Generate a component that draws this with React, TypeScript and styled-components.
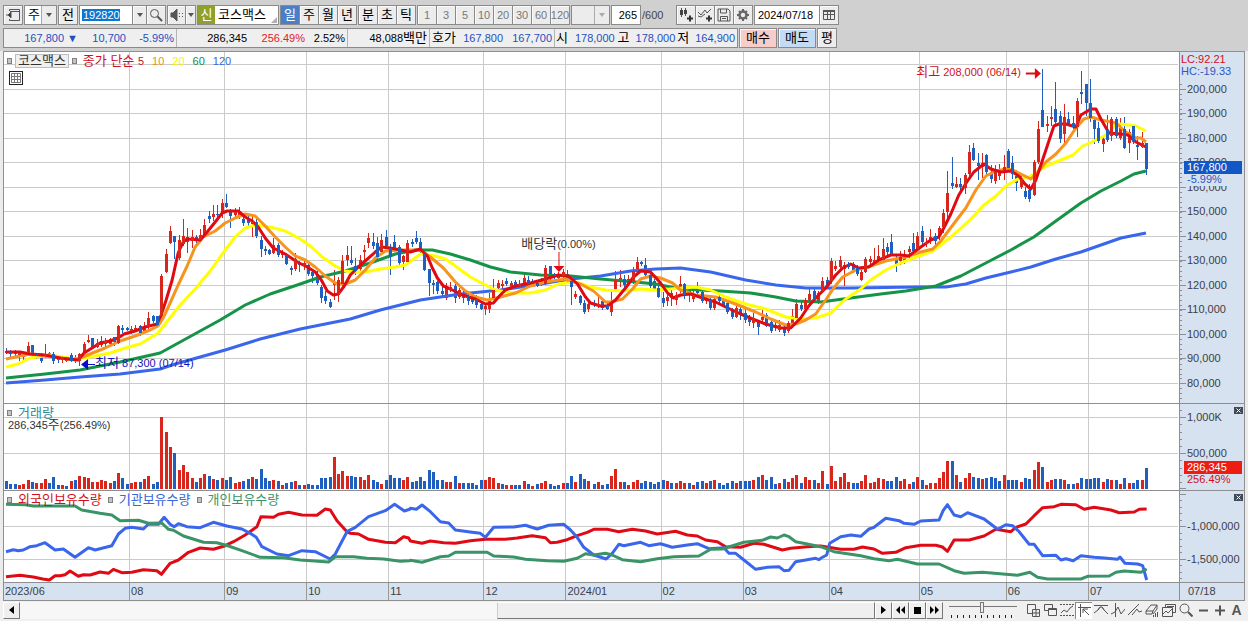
import React from "react";
import styled, { createGlobalStyle, css } from "styled-components";

/* ---------- palette ---------- */
const c = {
  up: "#d8261c",
  down: "#1f5fbf",
  ma5: "#e00a14",
  ma10: "#f7941d",
  ma20: "#ffff00",
  ma60: "#159447",
  ma120: "#3a66ec",
  retail: "#3a9468",
  grid: "#cacaca",
  line: "#8f8f8f",
  axis: "#d7e2f0",
  ink: "#3c4048",
};

const FONT = '"Liberation Sans", "Noto Sans CJK KR", sans-serif';

const Global = createGlobalStyle`
  *, *::before, *::after { box-sizing: border-box; }
  html, body { margin: 0; padding: 0; background: #ececec; }
  body, button, input, select { font-family: ${FONT}; font-size: 11px; line-height: 16px; color: #000; }
  button, input, select { margin: 0; padding: 0; border-radius: 0; }
`;

/* Hangul is set two pixels larger than the figures beside it. */
const Ko = styled.span`
  font-size: 13px;
`;

/* ---------- market data ---------- */

/* One candle per trading day: direction, then high, body top, body bottom, low. */
const CANDLES = `
b348 351 353 354|b350 352 354 357|b350 351 354 358|r352 353 355 361|r354 355 357 360|r342 346 353 355|b345 345 355 357|b353 354 356 359|b353 355 361 363|r344 354 356 358
b352 353 355 357|b352 354 361 364|b356 357 360 363|r356 357 360 363|r356 358 361 362|b353 355 361 362|r355 357 361 363|r353 354 361 366|r342 344 353 354|r335 340 342 343
b338 338 347 349|r339 343 347 348|r336 341 345 347|r338 341 344 349|r338 339 344 347|b337 337 342 346|r325 326 343 344|b325 328 330 333|b327 328 330 331|r326 329 331 334
r325 328 330 332|b325 326 333 336|r322 327 331 332|r312 318 327 330|b315 316 321 323|b316 316 325 327|r274 276 316 318|r249 254 272 273|r226 231 243 244|b236 236 242 259
r235 240 258 260|r219 236 244 246|r228 237 242 253|r230 237 241 248|b235 237 240 244|r229 235 240 242|r219 225 237 238|b211 216 219 223|r205 214 217 221|b205 214 215 219
r199 203 214 218|b194 203 207 208|b209 210 216 228|r208 212 215 219|r207 212 216 219|b214 219 223 226|b216 220 223 226|r215 221 224 237|b216 222 236 238|b236 240 249 257
b246 249 251 255|b249 250 254 255|r238 245 253 254|b243 245 255 257|r250 252 255 258|b254 255 264 265|b266 268 270 275|r253 259 269 271|b261 263 265 272|r261 263 266 270
b262 265 274 276|b270 272 276 283|b271 274 283 285|b285 287 298 303|b291 296 301 304|b299 302 307 308|r270 283 285 300|r277 280 294 302|r255 261 284 286|r246 255 260 266
b246 260 263 265|b258 266 271 275|r255 260 269 271|r245 250 252 262|r233 238 243 248|b233 242 246 249|b237 243 257 261|r234 240 252 254|b230 237 246 248|b244 248 257 275
b235 242 250 252|b245 247 263 265|r255 256 262 270|r240 243 262 265|b239 242 244 247|b231 238 242 244|b238 242 252 254|b252 253 270 271|b269 269 283 296|b280 283 285 294
b281 282 291 294|b286 291 294 297|r283 288 298 300|r282 287 290 292|b284 286 298 303|r288 290 297 299|b290 294 298 303|b291 296 301 305|b294 298 302 304|b295 299 305 308
b301 304 309 310|r304 306 309 315|r293 301 309 313|r279 290 298 300|r280 283 288 290|r280 284 286 290|b278 281 284 286|r281 283 286 289|b280 282 285 286|r280 284 286 288
r274 278 284 286|b276 280 284 286|b279 282 285 287|b281 283 286 287|r278 281 284 286|r265 268 284 285|b266 266 275 280|b273 274 276 279|r272 274 278 280|r269 272 276 279
b270 274 280 282|b280 281 287 305|r291 294 297 299|b295 296 303 305|b300 303 312 314|r301 304 309 312|b300 303 305 307|r295 304 306 308|b299 301 308 310|b303 305 309 310
r292 302 312 316|r271 280 289 290|r270 278 281 287|b275 279 285 288|r275 279 284 285|r267 271 281 284|r257 262 272 274|b261 262 264 266|b258 265 275 276|b274 275 286 288
b279 281 289 290|b286 288 297 298|b292 298 303 307|r291 297 301 306|r289 293 298 306|r292 295 300 305|r276 284 291 293|b283 284 295 299|r287 291 294 302|r291 295 299 302
b282 288 293 295|b289 292 301 303|r295 298 301 304|b297 300 308 310|r297 299 308 310|b295 297 301 303|b298 300 305 306|b302 303 312 314|b308 310 317 319|r306 308 317 318
b307 309 315 320|b307 313 320 323|b315 319 322 326|r313 318 323 328|b320 322 327 335|r307 317 320 323|b313 315 326 327|b321 322 331 333|b320 325 328 331|r320 325 330 332
b324 327 333 336|r321 323 331 333|r309 316 324 328|r299 304 318 320|b302 305 309 311|r298 300 309 311|r288 294 302 307|b289 291 300 302|r291 293 303 304|r277 281 291 293
b277 280 286 289|r258 261 281 284|r261 266 269 271|r256 260 267 272|r262 265 269 286|b262 264 267 269|b262 264 270 273|b265 268 274 276|r268 272 280 281|r257 259 272 273
r256 259 262 265|r248 260 262 266|r245 256 261 263|r238 249 260 262|b243 247 252 256|b234 242 254 256|b255 258 265 272|r251 257 261 265|r250 254 262 264|r246 249 252 258
b233 243 251 253|r232 236 249 251|b226 231 242 246|r238 242 244 247|r229 237 241 244|b233 236 241 245|r226 228 236 240|r209 213 227 233|r171 193 212 222|b157 183 186 189
r177 184 187 188|b178 184 187 193|r173 175 188 194|r145 152 174 178|b143 148 160 161|b153 163 166 180|r153 163 167 178|b154 155 172 176|b165 172 179 183|r165 172 181 184
r164 172 176 180|r155 167 170 180|b149 151 168 171|b156 163 174 179|b170 176 183 191|r174 179 187 189|b187 191 197 199|b184 190 199 202|r160 162 195 196|r121 129 162 164
b69 110 127 127|r116 124 126 132|r106 117 119 126|b82 109 122 124|b111 116 139 143|r104 117 134 146|b112 119 124 126|b116 123 127 129|r98 101 127 137|b71 92 94 104
b84 84 103 116|b79 103 118 122|b117 120 129 144|b122 128 141 143|r136 139 144 152|b115 130 140 142|r117 119 136 141|b117 119 136 138|r118 128 138 140|b117 129 148 149
r129 132 143 153|b126 126 142 144|b136 145 147 160|r132 143 147 148|b143 143 169 175`
  .trim()
  .split(/[|\n]/)
  .map((s) => {
    const [high, top, bottom, low] = s.slice(1).split(" ").map(Number);
    return { up: s[0] === "r", high, top, bottom, low };
  });

/* Daily volume: direction and bar height. */
const VOLUME = `
b8 b5 b5 r4 r5 r9 b7 r6 r6 r10 b6 b12 b4 r4 b3 r8 b9 r13 r12 r11
r7 r7 r9 r8 r6 b8 r16 b11 b5 r6 r7 b7 r10 r13 b5 b7 r72 r57 r42 b36
r19 r24 r17 r11 b7 r11 r15 b13 r10 b9 r11 b9 b12 r6 r7 b8 b10 r12 b10 b20
b11 b8 r9 b8 r4 b6 b7 r8 b4 r4 b5 b4 b4 b11 b11 b12 r32 r15 r18 r13
b13 b12 r12 r9 r14 b9 b7 r5 b9 b14 b11 b11 r9 r12 b7 b8 b12 b8 b19 b17
b9 b9 r7 r7 b13 r6 b6 b6 b6 b4 b9 r9 r12 r11 r6 b5 r4 r4 b4 b4
r8 b5 r3 b5 r6 r8 b5 b3 b4 r6 b6 b13 r7 b15 b10 r8 b5 r7 b4 b5
r13 r20 r7 b7 r4 r7 r9 b6 b8 b7 b5 b7 b9 r8 b6 r6 r8 r6 b6 r4
b7 b8 r6 b8 r9 b6 b4 b6 b8 r6 b8 b8 b8 r9 b12 r14 b9 b12 b5 r6
b10 r7 r11 r14 b6 r12 r9 b9 r6 r18 b5 r23 r8 r12 r16 r7 b6 b6 r8 r14
r6 r7 r11 r10 b8 b8 b12 r8 r10 r5 b7 r12 b9 r4 r6 r6 r11 r17 r28 b28
r14 b7 r11 r16 b12 b11 r10 b11 b12 b11 b8 r14 b9 b9 b9 r7 b11 b10 r19 r27
b22 r7 r9 b10 b10 r9 b5 b5 r6 b11 b10 b10 b11 b11 r7 b10 r9 b9 r5 b11
r6 b6 b9 r9 b21`
  .trim()
  .split(/\s+/)
  .map((s) => ({ up: s[0] === "r", h: Number(s.slice(1)) }));

const MOVING_AVERAGES = [
  {
    color: c.ma120,
    points:
      "6,383 45,380 80,377 120,374 160,369 175,364 200,357 225,350 260,339 300,329 350,319 380,310 420,300 460,294 500,290 540,284 570,279 600,276 630,271 655,269 680,268 710,272 745,280 775,285 805,288 850,288 918,287 945,287 965,284 985,278 1010,272 1030,267 1055,259 1080,252 1100,245 1120,238 1145,233",
  },
  {
    color: c.ma60,
    points:
      "6,378 45,374 80,370 120,362 160,353 180,342 200,331 220,320 245,305 270,294 300,284 320,277 345,271 370,263 395,254 415,250 432,250 450,254 470,260 490,267 510,272 540,275 570,276 600,279 635,282 655,284 680,289 720,291 750,293 775,297 795,301 820,302 850,298 880,294 905,291 935,286 960,276 985,263 1010,250 1033,237 1055,221 1080,203 1100,191 1120,181 1133,174 1145,171",
  },
  {
    color: c.ma20,
    points:
      "6,367 18,364 30,358 50,355 75,359 90,357 110,353 125,348 140,344 158,333 165,324 180,305 195,289 210,271 225,250 235,237 245,228 255,225 270,227 285,231 300,239 310,246 322,257 335,266 345,271 355,272 365,272 380,269 395,267 405,265 412,260 420,254 435,256 445,259 455,266 470,277 483,284 495,290 505,292 515,293 530,293 545,290 558,284 575,282 590,287 605,290 620,291 640,289 655,290 670,289 695,287 710,290 725,297 745,304 765,309 785,317 800,319 815,318 830,313 845,299 860,289 870,280 885,270 900,263 918,256 932,251 945,241 957,231 970,219 983,205 995,196 1005,186 1017,179 1028,177 1035,173 1045,166 1060,160 1072,155 1082,146 1095,140 1107,134 1114,125 1120,124 1135,126 1145,131",
  },
  {
    color: c.ma10,
    points:
      "6,359 20,356 30,354 45,356 60,358 75,360 90,354 105,348 120,341 135,336 150,330 158,326 163,318 170,303 178,285 187,266 195,247 203,237 215,231 225,223 235,218 245,214 255,216 265,226 275,237 285,247 295,256 305,260 315,267 325,276 335,283 345,284 355,280 365,270 375,258 385,251 400,250 420,250 430,257 443,268 455,282 465,291 475,297 487,300 500,297 515,293 530,286 545,282 565,279 580,284 593,291 605,302 610,302 622,299 632,289 640,279 650,276 660,278 672,283 680,290 695,295 715,297 735,304 755,312 770,319 785,325 795,324 805,320 815,314 825,300 833,288 842,277 855,270 870,266 885,261 905,257 920,252 932,249 940,241 952,225 965,208 975,190 985,176 995,171 1005,169 1012,170 1022,175 1030,179 1037,172 1045,162 1055,154 1065,143 1075,128 1083,119 1090,117 1100,120 1115,123 1125,132 1135,138 1140,138 1145,142",
  },
  {
    color: c.ma5,
    points:
      "6,352 20,352 30,354 45,355 60,358 78,360 84,353 92,348 100,343 110,341 118,338 124,334 135,331 145,327 157,324 161,315 166,300 172,280 178,253 183,242 187,239 200,240 207,232 215,222 222,213 227,211 238,211 245,217 252,221 258,227 265,238 273,248 285,254 297,262 307,267 315,272 321,280 327,291 333,295 338,294 344,286 350,275 358,267 366,260 375,252 381,247 390,248 400,250 410,252 420,249 427,256 432,268 437,278 443,286 450,289 462,295 475,299 485,304 493,303 499,296 505,290 515,286 530,283 545,279 558,275 568,276 577,284 585,297 590,303 600,306 607,306 615,300 625,288 633,277 640,271 650,272 660,283 667,293 673,298 680,295 690,294 705,299 715,302 725,307 740,314 752,319 765,324 780,328 790,328 800,318 808,306 815,298 825,288 835,275 842,268 850,264 858,268 868,267 878,260 890,255 900,255 908,256 920,247 930,240 938,237 943,228 950,214 958,195 966,182 973,172 983,164 990,169 1000,172 1010,171 1018,176 1024,184 1030,189 1035,180 1040,165 1046,147 1053,126 1058,124 1065,124 1075,127 1080,115 1090,109 1095,109 1100,119 1108,133 1120,134 1127,135 1135,142 1145,147",
  },
];

/* Holdings are stored in thirds of a unit, in three stretches of the session range. */
const STRETCH_START = [0, 410, 820];
const holdings = (stretches: string[]) =>
  stretches
    .map((s, i) =>
      s
        .split(" ")
        .map((p) => {
          const [x, y] = p.split(",").map(Number);
          return `${(STRETCH_START[i] + x / 3).toFixed(1)},${(400 + y / 3).toFixed(1)}`;
        })
        .join(" ")
    )
    .join(" ");

const INVESTORS = [
  {
    color: c.ma5,
    points: holdings([
      "18,530 60,526 100,531 128,537 148,540 165,527 180,527 195,524 210,513 235,529 250,524 270,525 300,516 325,520 340,508 365,518 395,517 430,509 470,512 484,523 510,490 535,480 565,457 600,444 640,448 675,437 700,425 735,405 770,380 782,350 820,352 835,343 865,337 905,345 950,346 975,327 990,330 1010,362 1040,395 1050,400 1075,402 1105,418 1155,427 1185,428 1210,410 1225,414",
      "0,423 35,430 60,423 100,428 135,430 180,422 225,418 285,418 320,414 365,407 405,413 420,428 440,427 470,419 500,407 530,397 550,388 590,388 625,395 665,388 705,393 740,402 795,394 830,405 860,408 885,420 920,425 945,440 990,442 1030,430 1060,433 1115,450 1140,445 1190,440 1225,438",
      "0,438 60,448 100,448 125,441 160,447 185,460 225,457 255,443 300,436 345,436 365,441 380,454 400,420 445,420 490,408 525,388 570,395 585,382 615,372 640,347 665,323 700,320 720,313 765,314 790,328 820,322 870,330 895,338 940,336 955,328 977,327",
    ]),
  },
  {
    color: c.ma120,
    points: holdings([
      "18,455 40,449 55,452 70,450 90,440 110,437 135,428 165,450 190,447 225,472 265,443 285,450 335,437 355,402 375,385 395,382 430,387 445,372 475,373 492,352 510,373 522,380 535,371 560,380 600,383 640,367 680,378 725,387 750,400 768,412 785,440 830,462 865,467 905,452 945,455 990,477 1005,462 1040,395 1065,382 1105,350 1155,332 1183,313 1212,333 1228,328",
      "0,325 18,328 35,315 60,335 90,365 115,369 135,390 185,397 210,400 225,412 250,382 310,381 345,376 380,387 415,376 460,373 480,390 500,412 520,442 550,465 587,477 605,460 625,433 640,437 690,427 715,437 750,431 785,442 830,435 860,431 895,446 940,443 955,460 975,460 1000,480 1035,508 1070,502 1105,500 1120,512 1135,511 1155,485 1215,475 1225,479",
      "0,475 18,465 27,430 60,410 90,405 120,409 145,387 160,382 195,355 235,362 250,370 280,373 300,363 355,360 367,332 380,314 400,345 420,350 440,338 490,357 530,388 555,374 575,377 595,395 625,433 640,433 665,467 705,466 720,480 735,476 757,482 780,467 820,472 850,474 890,478 897,471 912,490 950,492 965,497 977,540",
    ]),
  },
  {
    color: c.retail,
    points: holdings([
      "18,313 75,314 100,318 225,318 245,330 300,340 335,345 360,362 415,361 445,370 485,369 505,388 520,391 550,408 610,427 650,428 685,438 725,452 780,472 850,473 900,480 985,486 1005,470 1060,470 1100,475 1150,477 1200,484 1228,482",
      "0,481 35,487 90,470 115,468 135,457 230,457 250,468 310,471 345,478 410,482 460,484 500,475 525,461 550,465 585,460 605,465 635,479 690,485 740,476 790,470 865,468 900,448 935,447 1000,427 1055,421 1080,411 1100,414 1120,405 1135,410 1155,425 1190,432 1228,440",
      "0,440 40,455 120,467 160,476 205,482 230,478 290,492 355,492 400,512 430,520 485,517 590,526 627,517 650,532 680,537 780,537 800,529 865,528 885,517 910,513 960,517 977,507",
    ]),
  },
];

/* Months on the time axis, with the share of the width that each takes. */
const MONTHS: [string, number][] = [
  ["2023/06", 125],
  ["08", 95],
  ["09", 82],
  ["10", 82],
  ["11", 95],
  ["12", 82],
  ["2024/01", 95],
  ["02", 82],
  ["03", 86],
  ["04", 90],
  ["05", 87],
  ["06", 82],
  ["07", 91],
];

const LEFT = 4;
const WIDTH = 1174;
const monthLines = MONTHS.slice(0, -1).reduce<number[]>(
  (acc, [, w]) => [...acc, (acc.length ? acc[acc.length - 1] : LEFT) + w],
  []
);
const candleX = (i: number) => Math.round(6 + i * 4.314);
const priceY = (p: number) => Math.round(333.9 - (p - 100) * 2.45);

/* ---------- toolbar parts ---------- */

const Header = styled.header`
  display: flex;
  flex-direction: column;
  gap: 3px;
  padding: 5px 3px 3px;
  background: #d0d0d0;
`;

const Bar = styled.div`
  display: flex;
  height: 20px;
  white-space: nowrap;
`;

const Group = styled.div`
  display: flex;
  margin-right: 1px;
  > * + * { margin-left: -1px; }
`;

type Tone = "plain" | "active" | "dim" | "buy" | "sell";
const toneCss = {
  plain: css`background: #ececec; color: #000;`,
  active: css`background: #4a7fc8; color: #fff;`,
  dim: css`background: #ececec; color: #777; font-size: 11px;`,
  buy: css`background: #f6cdc9; color: #000;`,
  sell: css`background: #c3dbf5; color: #000;`,
};

const Key = styled.button<{ $w?: number; $tone?: Tone }>`
  display: flex;
  align-items: center;
  justify-content: center;
  width: ${(p) => p.$w ?? 20}px;
  height: 20px;
  border: 1px solid #8a8a8a;
  box-shadow: ${(p) => (p.$tone === "active" ? "none" : "inset 1px 1px 0 #fafafa")};
  font-size: 13px;
  ${(p) => toneCss[p.$tone ?? "plain"]}
`;

const SelectBox = styled.label<{ $w: number; $bg?: string; $arrow?: string }>`
  position: relative;
  display: block;
  width: ${(p) => p.$w}px;
  height: 20px;
  border: 1px solid #8a8a8a;
  background: ${(p) => p.$bg ?? "#fff"};

  select {
    display: block;
    width: 100%;
    height: 18px;
    padding-left: 3px;
    border: 0;
    appearance: none;
    background: transparent;
    font-size: 13px;
  }
  &::before {
    content: "";
    position: absolute;
    right: 0;
    top: 0;
    width: 15px;
    height: 18px;
    border-left: 1px solid #aaa;
    background: #ececec;
    pointer-events: none;
  }
  &::after {
    content: "";
    position: absolute;
    right: 4px;
    top: 7px;
    border: 3px solid transparent;
    border-top: 4px solid ${(p) => p.$arrow ?? "#555"};
    border-bottom: 0;
    pointer-events: none;
  }
`;

const TextField = styled.input<{ $w: number; $align?: string }>`
  width: ${(p) => p.$w}px;
  height: 20px;
  padding: 0 3px;
  border: 1px solid #8a8a8a;
  background: #fff;
  text-align: ${(p) => p.$align ?? "left"};
`;

const CodeField = styled(TextField)`
  color: #fff;
  background: linear-gradient(#0a78d2, #0a78d2) 2px 3px / 38px 12px no-repeat #fff;
`;

const Caret = styled.i`
  border: 3px solid transparent;
  border-top: 4px solid #555;
  border-bottom: 0;
`;

const StockName = styled.div`
  position: relative;
  display: flex;
  gap: 3px;
  width: 82px;
  border: 1px solid #8a8a8a;
  background: #fff;
  font-size: 13px;
  line-height: 18px;

  &::after {
    content: "";
    position: absolute;
    right: 1px;
    bottom: 1px;
    border: 3px solid #b0b0b0;
    border-top-color: transparent;
    border-left-color: transparent;
  }
`;

const Badge = styled.span`
  width: 17px;
  background: #8fa02c;
  color: #fff;
  text-align: center;
`;

const Total = styled.span`
  width: 34px;
  line-height: 20px;
  color: #444;
`;

const Quotes = styled.div`
  display: flex;
  margin-right: 1px;
  border: 1px solid #8a8a8a;
  background: #efefef;
`;

const QuoteCell = styled.div<{ $w: number }>`
  display: flex;
  justify-content: flex-end;
  width: ${(p) => p.$w}px;
  padding-right: 2px;
  line-height: 18px;
  & + & { border-left: 1px solid #b4b4b4; }
`;

const Quote = styled.span<{ $w: number; $color?: string }>`
  width: ${(p) => p.$w}px;
  text-align: right;
  color: ${(p) => p.$color ?? "#000"};
`;

/* ---------- chart parts ---------- */

const Frame = styled.main`
  margin: 0 3px;
  border: 1px solid ${c.line};
  background: #fff;
`;

const Pane = styled.section`
  display: grid;
  grid-template-columns: minmax(0, 1fr) 65px;
  border-bottom: 1px solid ${c.line};
`;

const Plot = styled.div`
  position: relative;
`;

const PlotSvg = styled.svg`
  display: block;
  width: 100%;
`;

const Scale = styled.div`
  position: relative;
  border-left: 1px solid ${c.line};
  background: ${c.axis};
  svg { display: block; }
  text { font-family: ${FONT}; font-size: 11px; }
`;

const Legend = styled.div`
  position: absolute;
  left: 3px;
  top: 1px;
  display: flex;
  align-items: center;
  gap: 6px;
  font-size: 13px;
`;

const Dot = styled.i`
  width: 5px;
  height: 6px;
  border: 1px solid #808080;
  background: #c4c4c4;
`;

const Chip = styled.span`
  padding: 0 2px;
  margin: 0 -3px;
  height: 14px;
  border: 1px solid #bcbcbc;
  background: #efefef;
  line-height: 12px;
  color: #333;
`;

const Series = styled.span<{ $color: string }>`
  color: ${(p) => p.$color};
`;

const Period = styled.span<{ $color: string }>`
  margin-left: 2px;
  font-size: 11px;
  color: ${(p) => p.$color};
`;

const Num = styled.span`
  font-size: 11px;
`;

const TableButton = styled.button`
  position: absolute;
  left: 5px;
  top: 19px;
  width: 14px;
  height: 14px;
  border: 1px solid #222;
  background: #fff;
  svg { display: block; }
`;

const Note = styled.span<{ $x: number; $y: number; $color: string; $shift?: string }>`
  position: absolute;
  left: ${(p) => ((p.$x - LEFT) / WIDTH) * 100}%;
  top: ${(p) => p.$y}px;
  transform: translateX(${(p) => p.$shift ?? "0"});
  color: ${(p) => p.$color};
  white-space: nowrap;
`;

const CloseBox = styled.button`
  position: absolute;
  right: 1px;
  top: 3px;
  width: 9px;
  height: 7px;
  border: 0;
  background: #414a5a;
  svg { display: block; }
`;

const TimeAxis = styled.div`
  display: grid;
  grid-template-columns: minmax(0, 1fr) 65px;
  height: 17px;
  background: ${c.axis};
  color: ${c.ink};
`;

const Months = styled.div`
  display: grid;
  grid-template-columns: ${MONTHS.map(([, w]) => `${w}fr`).join(" ")};
  span { padding-left: 1px; }
  span + span { border-left: 1px solid #999; }
`;

const Today = styled.span`
  padding-left: 8px;
  border-left: 1px solid ${c.line};
`;

/* ---------- bottom strip parts ---------- */

const Footer = styled.footer`
  display: flex;
  align-items: center;
  height: 20px;
  padding: 0 3px 2px;
  background: #f0f0f0;
`;

const Raised = styled.button`
  display: flex;
  align-items: center;
  justify-content: center;
  flex: none;
  width: 17px;
  height: 17px;
  border: 1px solid;
  border-color: #fff #777 #777 #fff;
  background: #efefef;
`;

const Track = styled.div`
  display: flex;
  flex: 1;
  height: 17px;
  background: #f7f7f7;
`;

const Handle = styled.div`
  flex: 377;
  border: 1px solid;
  border-color: #fff #777 #777 #ccc;
  background: #efefef;
`;

const Rest = styled.div`
  flex: 479;
`;

const Zoom = styled.label`
  width: 68px;
  height: 16px;
  margin: 0 7px 0 6px;
  background: repeating-linear-gradient(90deg, #222 0 1px, transparent 1px 6px) 2px 13px / 66px 3px no-repeat;

  input {
    display: block;
    width: 68px;
    height: 11px;
    appearance: none;
    background: linear-gradient(#777, #777) 0 4px / 100% 1px no-repeat;
  }
  input::-webkit-slider-thumb {
    appearance: none;
    width: 4px;
    height: 11px;
    border: 1px solid #777;
    background: #eee;
  }
`;

const Tool = styled.button<{ $on?: boolean }>`
  flex: none;
  width: 17px;
  height: 17px;
  border: 0;
  background: ${(p) => (p.$on ? "#fff" : "transparent")};
  box-shadow: ${(p) => (p.$on ? "inset 1px 1px 0 #888" : "none")};
  color: #555;
  font-size: 14px;
  font-weight: bold;
  svg { display: block; margin: 0 auto; }
`;

/* ---------- icons ---------- */

const Icon = ({ size = 14, children }: { size?: number; children: React.ReactNode }) => (
  <svg width={size} height={size} viewBox="0 0 14 14" fill="none" stroke="#555" strokeWidth="1" aria-hidden="true">
    {children}
  </svg>
);

const toolIcons: { name: string; on?: boolean; art: React.ReactNode }[] = [
  { name: "창 추가", art: <path d="M6 10.500H1.500v-9h8V6M6.500 6.500h7v7h-7zM10 6.500v7M6.500 10h7" /> },
  { name: "창 복사", art: <><path d="M1.500 1.500h8v6h-8z" /><path d="M5.500 5.500h8v7h-8z" fill="#f0f0f0" /><path d="M5.500 6.500h8" /></> },
  { name: "구간", art: <><path d="M0 1.500h14M0 12.500h14" strokeDasharray="2 1" /><path d="M1 10l3-3 3 2 3-4 3-2" /></> },
  { name: "십자선", on: true, art: <path d="M3.500 1v13M1 4.500h13M6 6l6 6M6 10V6h5" /> },
  { name: "수평선", art: <path d="M0 2.500h14M0 10l4-3 2-3 2 0 2 3 4 4M6 4l-2 3M8 4l2 3" /> },
  { name: "수직선", art: <path d="M4.500 0v14M0 11l4-2 3-5 3 7 4-5" /> },
  { name: "추세선", art: <path d="M0 12L11 1M4 12l5-6 2 3 3-1" /> },
  { name: "지우개", art: <path d="M1 8l5-6h6l-4 6zM1 8v3h6l1-3M8 11l4-5V2M8.500 12v2M10.500 10v4M12.500 9v5" /> },
  { name: "차트 겹치기", art: <><path d="M3.500 4V1.500h10v8H11M.5 4.500h10v9H.5z" /><path d="M1 11l3-3 2 2 4-4M5 3.500h7" /></> },
  { name: "돋보기", art: <><circle cx="5.500" cy="5.500" r="4.500" /><path d="M9 9l4.500 4.500" strokeWidth="2" /></> },
  { name: "축소", art: <path d="M3 7.500h9" strokeWidth="2" /> },
  { name: "확대", art: <path d="M2 7.500h10M7 2.500v10" strokeWidth="2" /> },
];

const CloseMark = () => (
  <svg width="9" height="7" viewBox="0 0 9 7" stroke="#fff" aria-hidden="true">
    <path d="M2.500 1.500l4 4M6.500 1.500l-4 4" />
  </svg>
);

/* ---------- panes ---------- */

const GridLines = ({ top, bottom, rows }: { top: number; bottom: number; rows: number[] }) => (
  <g stroke={c.grid} shapeRendering="crispEdges">
    {monthLines.map((x) => (
      <path key={x} d={`M${x + 0.5} ${top}V${bottom}`} />
    ))}
    {rows.map((y) => (
      <path key={y} d={`M${LEFT} ${y + 0.5}H${LEFT + WIDTH - 1}`} />
    ))}
  </g>
);

const prices = [200, 190, 180, 170, 160, 150, 140, 130, 120, 110, 100, 90, 80];

const Ticks = ({ major, minor }: { major: number[]; minor: number[] }) => (
  <g stroke="#8a8f98" shapeRendering="crispEdges">
    {major.map((y) => <path key={y} d={`M1180 ${y + 0.5}h6`} />)}
    {minor.map((y) => <path key={y} d={`M1180 ${y + 0.5}h2`} />)}
  </g>
);

const range = (n: number, f: (i: number) => number) => Array.from({ length: n }, (_, i) => f(i));

const Body = ({ i }: { i: number }) => {
  const k = CANDLES[i];
  return <rect x={candleX(i) - 1} y={k.top} width="3" height={Math.max(1, k.bottom - k.top)} fill={k.up ? c.up : c.down} />;
};

const PricePane = () => (
  <Pane>
    <Plot>
      <PlotSvg height="351" viewBox={`${LEFT} 52 ${WIDTH} 351`} preserveAspectRatio="none">
        <GridLines top={52} bottom={403} rows={[priceY(210), ...prices.map(priceY)]} />
        <g shapeRendering="crispEdges">
          {CANDLES.map((k, i) => (
            <g key={i}>
              <rect x={candleX(i)} y={k.high} width="1" height={k.low - k.high} fill={k.up ? c.up : c.down} />
              <Body i={i} />
            </g>
          ))}
        </g>
        <g fill="none" strokeWidth="3" strokeLinejoin="round">
          {MOVING_AVERAGES.map((m) => <polyline key={m.color} points={m.points} stroke={m.color} />)}
        </g>
        <g shapeRendering="crispEdges">
          {CANDLES.map((k, i) => (i % 2 || k.bottom - k.top > 12 ? <Body key={i} i={i} /> : null))}
        </g>
        <path d="M1025 73.500h10" stroke="#e00a14" strokeWidth="2" />
        <path d="M1034 68l6 5.500-6 5.500z" fill="#e00a14" />
        <path d="M558.500 252v15" stroke="#e00a14" />
        <path d="M553 266h11l-5.500 6z" fill="#e00a14" />
        <path d="M86 364.500h9" stroke="#0a0ac8" />
        <path d="M88 359v11l-7-5.500z" fill="#0a0ac8" />
      </PlotSvg>
      <Legend>
        <Dot />
        <Chip>코스맥스</Chip>
        <Dot />
        <Series $color="#d0101c">종가 단순 <Num>5</Num></Series>
        <Period $color="#e8901c">10</Period>
        <Period $color="#f4f400">20</Period>
        <Period $color="#158a44">60</Period>
        <Period $color="#3a66d8">120</Period>
      </Legend>
      <TableButton aria-label="표 보기">
        <svg width="12" height="12" viewBox="0 0 12 12" fill="none" stroke="#777"><path d="M1.500 1.500h9v9h-9zM4.500 1.500v9M7.500 1.500v9M1.500 4.500h9M1.500 7.500h9" /></svg>
      </TableButton>
      <Note $x={1020} $y={12} $color="#d0101c" $shift="-100%"><Ko>최고</Ko> 208,000 (06/14)</Note>
      <Note $x={558} $y={184} $color="#333" $shift="-50%"><Ko>배당락</Ko>(0.00%)</Note>
      <Note $x={95} $y={303} $color="#1414b8"><Ko>최저</Ko> 87,300 (07/14)</Note>
    </Plot>
    <Scale>
      <svg width="64" height="351" viewBox="1180 52 64 351">
        <Ticks major={prices.map(priceY)} minor={range(65, (i) => Math.round(398 - i * 4.9)).filter((y) => y > 78)} />
        <g fill={c.ink}>
          {prices.map((p) => <text key={p} x="1187" y={priceY(p) + 4}>{p},000</text>)}
        </g>
        <text x="1181" y="63" fill="#d0101c">LC:92.21</text>
        <text x="1181" y="75" fill="#2a58c0">HC:-19.33</text>
        <rect x="1184" y="174" width="58" height="12" fill={c.axis} />
        <rect x="1184" y="161" width="58" height="13" fill="#1058c8" />
        <text x="1187" y="171" fill="#fff">167,800</text>
        <text x="1187" y="183" fill="#2a58c0">-5.99%</text>
      </svg>
    </Scale>
  </Pane>
);

const VolumePane = () => (
  <Pane>
    <Plot>
      <PlotSvg height="86" viewBox={`${LEFT} 404 ${WIDTH} 86`} preserveAspectRatio="none">
        <GridLines top={404} bottom={490} rows={[417, 453]} />
        <g shapeRendering="crispEdges">
          {VOLUME.map((v, i) => (
            <rect key={i} x={candleX(i) - 1} y={489 - v.h} width="3" height={v.h} fill={v.up ? c.up : c.down} />
          ))}
        </g>
      </PlotSvg>
      <Legend>
        <Dot />
        <Series $color="#2f8a94">거래량</Series>
      </Legend>
      <Note $x={8} $y={13} $color="#333">286,345<Ko>주</Ko>(256.49%)</Note>
    </Plot>
    <Scale>
      <svg width="64" height="86" viewBox="1180 404 64 86">
        <Ticks major={[417, 453, 488]} minor={range(11, (i) => Math.round(410 + i * 7.2))} />
        <text x="1187" y="421" fill={c.ink}>1,000K</text>
        <text x="1187" y="457" fill={c.ink}>500,000</text>
        <rect x="1184" y="461" width="58" height="13" fill="#ee1c12" />
        <text x="1187" y="471" fill="#fff">286,345</text>
        <text x="1187" y="483" fill="#d0101c">256.49%</text>
      </svg>
      <CloseBox aria-label="거래량 닫기"><CloseMark /></CloseBox>
    </Scale>
  </Pane>
);

const InvestorPane = () => (
  <Pane>
    <Plot>
      <PlotSvg height="91" viewBox={`${LEFT} 491 ${WIDTH} 91`} preserveAspectRatio="none">
        <GridLines top={491} bottom={582} rows={[526, 559]} />
        <g fill="none" strokeWidth="3" strokeLinejoin="round">
          {INVESTORS.map((m) => <polyline key={m.color} points={m.points} stroke={m.color} />)}
        </g>
      </PlotSvg>
      <Legend>
        <Dot />
        <Series $color="#d0101c">외국인보유수량</Series>
        <Dot />
        <Series $color="#3a66d8">기관보유수량</Series>
        <Dot />
        <Series $color="#3a9468">개인보유수량</Series>
      </Legend>
    </Plot>
    <Scale>
      <svg width="64" height="91" viewBox="1180 491 64 91">
        <Ticks major={[494, 526, 559]} minor={range(13, (i) => Math.round(500 + i * 6.5))} />
        <text x="1187" y="530" fill={c.ink}>-1,000,000</text>
        <text x="1187" y="563" fill={c.ink}>-1,500,000</text>
      </svg>
      <CloseBox aria-label="보유수량 닫기"><CloseMark /></CloseBox>
    </Scale>
  </Pane>
);

/* ---------- page ---------- */

const blue = "#1f4fc0";

export default function App() {
  return (
    <>
      <Global />
      <Header>
        <Bar>
          <Group>
            <Key aria-label="목록 열기">
              <Icon><path d="M3.500 3V1.500h10v11h-10V11M4 3.500h9" /><path d="M0 7h2M5 4v6L2 7z" fill="#333" /></Icon>
            </Key>
          </Group>
          <Group>
            <SelectBox $w={33}><select aria-label="종목 구분" defaultValue="주"><option>주</option></select></SelectBox>
          </Group>
          <Group><Key>전</Key></Group>
          <Group>
            <CodeField $w={54} defaultValue="192820" aria-label="종목 코드" />
            <Key $w={15} aria-label="최근 종목"><Caret /></Key>
            <Key aria-label="종목 검색">
              <Icon><circle cx="5.500" cy="5.500" r="4" /><path d="M8.500 8.500l4.500 4.500" strokeWidth="2" /></Icon>
            </Key>
          </Group>
          <Group>
            <Key $w={19} aria-label="소리">
              <Icon><path d="M1 5h2l4-4v12L3 9H1z" fill="#555" /><path d="M9.500 5v1M9.500 8v1M12.500 5v1M12.500 8v1" /></Icon>
            </Key>
            <Key $w={11} aria-label="소리 설정"><Caret /></Key>
          </Group>
          <Group><StockName><Badge>신</Badge>코스맥스</StockName></Group>
          <Group>
            {["일", "주", "월", "년"].map((t) => <Key key={t} $tone={t === "일" ? "active" : "plain"}>{t}</Key>)}
          </Group>
          <Group>
            {["분", "초", "틱"].map((t) => <Key key={t}>{t}</Key>)}
          </Group>
          <Group>
            {["1", "3", "5", "10", "20", "30", "60", "120"].map((t) => <Key key={t} $tone="dim">{t}</Key>)}
          </Group>
          <Group>
            <SelectBox $w={39} $bg="#ececec" $arrow="#aaa"><select aria-label="주기" disabled><option></option></select></SelectBox>
          </Group>
          <Group><TextField $w={30} $align="right" defaultValue="265" aria-label="표시 개수" /></Group>
          <Total>/600</Total>
          <Group>
            <Key aria-label="차트 유형">
              <Icon><path d="M2.500 0v9M6.500 0v8" /><path d="M1 2h3v5H1zM5 2h3v4H5z" fill="#444" stroke="none" /><path d="M8 10.500h6M11 7.500v6" strokeWidth="2" stroke="#333" /></Icon>
            </Key>
            <Key aria-label="지표 추가">
              <Icon><path d="M0 4l3 3 4-5 2 3 4-4M0 8l3 1 4-3" /><path d="M8 10.500h6M11 7.500v6" strokeWidth="2" stroke="#333" /></Icon>
            </Key>
            <Key aria-label="저장">
              <Icon><path d="M1 1h10l2 2v10H1zM3.500 1v4h6V1M3.500 13V8.500h7V13M5 10.500h4" /></Icon>
            </Key>
            <Key aria-label="설정">
              <Icon><circle cx="7" cy="7" r="3.500" strokeWidth="2.500" stroke="#666" /><path d="M7 1v2M7 11v2M1 7h2M11 7h2M3 3l1 1M10 10l1 1M11 3l-1 1M4 10l-1 1" strokeWidth="2" stroke="#666" /></Icon>
            </Key>
          </Group>
          <Group>
            <TextField $w={66} defaultValue="2024/07/18" aria-label="기준일" />
            <Key aria-label="달력">
              <Icon><path d="M1.500 3.500h11v8h-11zM1.500 6.500h11M5.500 4v8M8.500 4v8" /><path d="M1 3h12" strokeWidth="2" /></Icon>
            </Key>
          </Group>
        </Bar>
        <Bar>
          <Quotes>
            <QuoteCell $w={172}>
              <Quote $w={42} $color={blue}>167,800</Quote>
              <Quote $w={14} $color={blue}>▼</Quote>
              <Quote $w={48} $color={blue}>10,700</Quote>
              <Quote $w={48} $color={blue}>-5.99%</Quote>
            </QuoteCell>
            <QuoteCell $w={171}>
              <Quote $w={44}>286,345</Quote>
              <Quote $w={58} $color="#e0202a">256.49%</Quote>
              <Quote $w={40}>2.52%</Quote>
            </QuoteCell>
            <QuoteCell $w={82}><Quote $w={70}>48,088<Ko>백만</Ko></Quote></QuoteCell>
            <QuoteCell $w={125}>
              <Quote $w={26}><Ko>호가</Ko></Quote>
              <Quote $w={47} $color={blue}>167,800</Quote>
              <Quote $w={49} $color={blue}>167,700</Quote>
            </QuoteCell>
            <QuoteCell $w={183}>
              <Quote $w={13}><Ko>시</Ko></Quote>
              <Quote $w={47} $color={blue}>178,000</Quote>
              <Quote $w={15}><Ko>고</Ko></Quote>
              <Quote $w={46} $color={blue}>178,000</Quote>
              <Quote $w={14}><Ko>저</Ko></Quote>
              <Quote $w={46} $color={blue}>164,900</Quote>
            </QuoteCell>
          </Quotes>
          <Group><Key $w={38} $tone="buy">매수</Key></Group>
          <Group><Key $w={38} $tone="sell">매도</Key></Group>
          <Group><Key>평</Key></Group>
        </Bar>
      </Header>

      <Frame>
        <PricePane />
        <VolumePane />
        <InvestorPane />
        <TimeAxis>
          <Months>{MONTHS.map(([m]) => <span key={m}>{m}</span>)}</Months>
          <Today>07/18</Today>
        </TimeAxis>
      </Frame>

      <Footer>
        <Raised aria-label="이전"><svg width="5" height="8"><path d="M5 0v8L0 4z" /></svg></Raised>
        <Track>
          <Rest />
          <Handle />
        </Track>
        <Raised aria-label="다음"><svg width="5" height="8"><path d="M0 0v8l5-4z" /></svg></Raised>
        <Raised aria-label="되감기"><svg width="9" height="8"><path d="M4 0v8L0 4zM9 0v8L5 4z" /></svg></Raised>
        <Raised aria-label="정지"><svg width="7" height="7"><path d="M0 0h7v7H0z" /></svg></Raised>
        <Raised aria-label="빨리감기"><svg width="9" height="8"><path d="M0 0v8l4-4zM5 0v8l4-4z" /></svg></Raised>
        <Zoom><input type="range" defaultValue="48" aria-label="확대 비율" /></Zoom>
        {toolIcons.map((t) => (
          <Tool key={t.name} $on={t.on} aria-label={t.name}><Icon>{t.art}</Icon></Tool>
        ))}
        <Tool>A</Tool>
      </Footer>
    </>
  );
}
